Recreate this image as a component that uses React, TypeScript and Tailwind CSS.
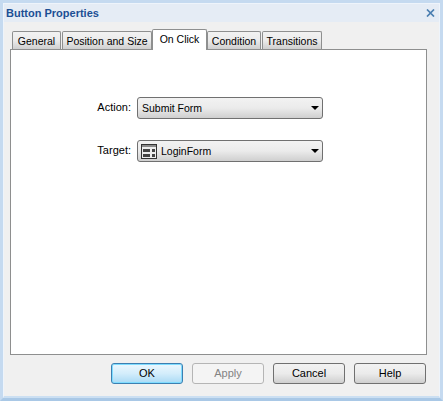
function Tab({ label, width, active }: { label: string; width: string; active?: boolean }) {
  if (active) {
    return (
      <div className={`${width} h-[21px] -mx-[1px] z-10 bg-white border border-b-0 border-[#8e8f8f] rounded-t-[2px] flex items-start justify-center pt-[2px] leading-[15px]`}>
        {label}
      </div>
    );
  }
  return (
    <div className={`${width} h-[18px] mt-[2px] bg-gradient-to-b from-[#f2f2f2] via-[#ebebeb] to-[#cfcfcf] border border-b-0 border-[#8e8f8f] rounded-t-[2px] flex items-start justify-center pt-[2px] leading-[15px]`}>
      {label}
    </div>
  );
}

function Combo({ children }: { children: React.ReactNode }) {
  return (
    <div className="w-[186px] h-[22px] border border-[#707070] rounded-[3px] bg-gradient-to-b from-[#f2f2f2] via-[#ebebeb] to-[#cfcfcf] flex items-center pl-[1px] pr-[3px]">
      <div className="flex-1 flex items-center">{children}</div>
      <div className="w-0 h-0 border-l-[4px] border-r-[4px] border-t-[4px] border-l-transparent border-r-transparent border-t-black" />
    </div>
  );
}

function Btn({ label, primary, disabled }: { label: string; primary?: boolean; disabled?: boolean }) {
  const cls = primary
    ? "border-[#3c7fb1] bg-gradient-to-b from-[#ecf8fe] via-[#d3edfb] to-[#a9daf5] text-black shadow-[inset_0_0_0_1px_#7fdcff]"
    : disabled
      ? "border-[#b5b5b5] bg-[#f4f4f4] text-[#838383]"
      : "border-[#707070] bg-gradient-to-b from-[#f2f2f2] via-[#ebebeb] to-[#cfcfcf] text-black";
  return (
    <div className={`w-[72px] h-[21px] border rounded-[3px] flex items-center justify-center ${cls}`}>
      {label}
    </div>
  );
}

export default function App() {
  return (
    <div className="w-[443px] h-[401px] overflow-hidden border-[3px] border-[#c5daf0] border-b-[#a9c8e6] font-['Liberation_Sans',sans-serif]">
      <div className="h-full flex flex-col bg-[#f0f0f0] text-[10.5px] text-black border border-[#eef4fb] border-b-2 border-b-[#cbdff2]">
        <div className="h-[18px] shrink-0 bg-[#e5ecf5] flex items-center justify-between pl-[2px] pr-[3px] pt-[1px]">
          <span className="font-bold text-[11px] text-[#1c4f94] leading-[15px]">Button Properties</span>
          <svg width="9" height="8" viewBox="0 0 9 8" className="mr-[1px] mb-[2px]">
            <path d="M1 0.5 L8 7.5 M8 0.5 L1 7.5" stroke="#4a7eb0" strokeWidth="1.7" fill="none" />
          </svg>
        </div>
        <div className="flex-1 flex flex-col px-[6px] pt-[7px]">
          <div className="flex h-[20px] pl-[2px] gap-[1px]">
            <Tab label="General" width="w-[49px]" />
            <Tab label="Position and Size" width="w-[90px]" />
            <Tab label="On Click" width="w-[55px]" active />
            <Tab label="Condition" width="w-[54px]" />
            <Tab label="Transitions" width="w-[60px]" />
          </div>
          <div className="h-[306px] w-[417px] bg-white border border-[#8e8f8f] flex flex-col pl-[78px] pt-[47px]">
            <div className="flex items-center gap-[6px]">
              <span className="w-[42px] text-right text-[11px] pb-[1px]">Action:</span>
              <Combo><span className="pl-[3px] pt-[1px]">Submit Form</span></Combo>
            </div>
            <div className="flex items-center gap-[6px] mt-[21px]">
              <span className="w-[42px] text-right text-[11px] pb-[1px]">Target:</span>
              <Combo>
                <svg width="16" height="15" viewBox="0 0 16 15" className="ml-[2px] mr-[4px]">
                  <rect x="0.5" y="0.5" width="15" height="14" fill="#ededed" stroke="#333" />
                  <rect x="1" y="1" width="14" height="2" fill="#8a8a8a" />
                  <rect x="2" y="5" width="7" height="3" fill="#444" />
                  <rect x="2" y="10" width="7" height="3" fill="#444" />
                  <rect x="11" y="5" width="3" height="3" fill="#444" />
                  <rect x="11" y="10" width="3" height="3" fill="#444" />
                </svg>
                <span className="pt-[1px]">LoginForm</span>
              </Combo>
            </div>
          </div>
          <div className="flex justify-end gap-[9px] mt-[8px] w-[416px] text-[11px]">
            <Btn label="OK" primary />
            <Btn label="Apply" disabled />
            <Btn label="Cancel" />
            <Btn label="Help" />
          </div>
        </div>
      </div>
    </div>
  );
}
